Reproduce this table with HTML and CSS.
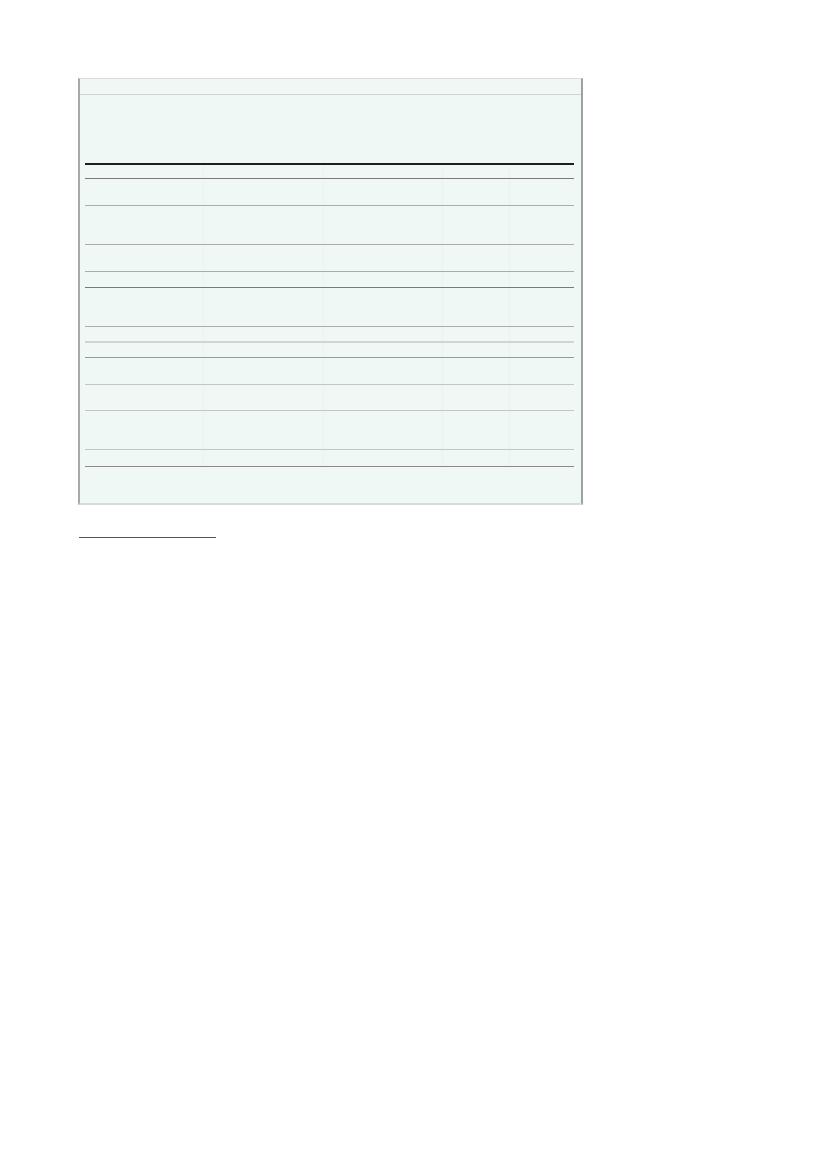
FILE: index.html
```html
<!DOCTYPE html>
<html lang="en">
<head>
<meta charset="utf-8">
<title>Table</title>
<link rel="stylesheet" href="styles.css">
</head>
<body>
<div class="page">
  <div class="box">
    <div class="head"></div>
    <div class="tablewrap">
      <div class="spacer"></div>
      <div class="row r-top h15"><span></span><span></span><span></span><span></span><span></span></div>
      <div class="row r-mid h27"><span></span><span></span><span></span><span></span><span></span></div>
      <div class="row r-lt h39"><span></span><span></span><span></span><span></span><span></span></div>
      <div class="row r-lt h27"><span></span><span></span><span></span><span></span><span></span></div>
      <div class="row r-lt h16"><span></span><span></span><span></span><span></span><span></span></div>
      <div class="row r-mid h39"><span></span><span></span><span></span><span></span><span></span></div>
      <div class="row r-lt h15"><span></span><span></span><span></span><span></span><span></span></div>
      <div class="row r-thick h16"><span></span><span></span><span></span><span></span><span></span></div>
      <div class="row r-mid2 h27"><span></span><span></span><span></span><span></span><span></span></div>
      <div class="row r-fa h26"><span></span><span></span><span></span><span></span><span></span></div>
      <div class="row r-fa h39"><span></span><span></span><span></span><span></span><span></span></div>
      <div class="row r-fa h17"><span></span><span></span><span></span><span></span><span></span></div>
      <div class="row r-mid last h37"></div>
    </div>
  </div>
  <div class="footrule"></div>
</div>
</body>
</html>
```

FILE: styles.css
```css
html, body {
  margin: 0;
  padding: 0;
  background: #ffffff;
  font-family: "Liberation Sans", Arial, sans-serif;
}
.page {
  padding: 78px 0 0 78px;
}
.box {
  width: 501px;
  background: #f0f8f6;
  border-left: 2px solid #a8a8a8;
  border-right: 2px solid #a0a0a0;
  border-top: 1px solid #dcdcdc;
  border-bottom: 2px solid #dadada;
}
.head {
  height: 15px;
  border-bottom: 1px solid #cfd3d2;
}
.tablewrap {
  padding: 0 7px 0 5px;
}
.spacer {
  height: 68px;
}
.row {
  box-sizing: border-box;
  display: grid;
  grid-template-columns: 118px 120px 119px 67px 1fr;
}
.row span {
  border-left: 1px solid #eaf3f1;
}
.row span:first-child {
  border-left: none;
}
.r-top { border-top: 2px solid #1e1e1e; }
.r-mid { border-top: 1px solid #7a7a7a; }
.r-mid2 { border-top: 1px solid #999999; }
.r-lt { border-top: 1px solid #acacac; }
.r-fa { border-top: 1px solid #c4c6c5; }
.r-thick { border-top: 2px solid #d2d4d3; }
.last { border-top-color: #8a8a8a; }
.h15 { height: 15px; }
.h16 { height: 16px; }
.h17 { height: 17px; }
.h26 { height: 26px; }
.h27 { height: 27px; }
.h37 { height: 37px; }
.h39 { height: 39px; }
.footrule {
  width: 137px;
  margin: 32px 0 0 1px;
  border-top: 1px solid #555555;
}
```
